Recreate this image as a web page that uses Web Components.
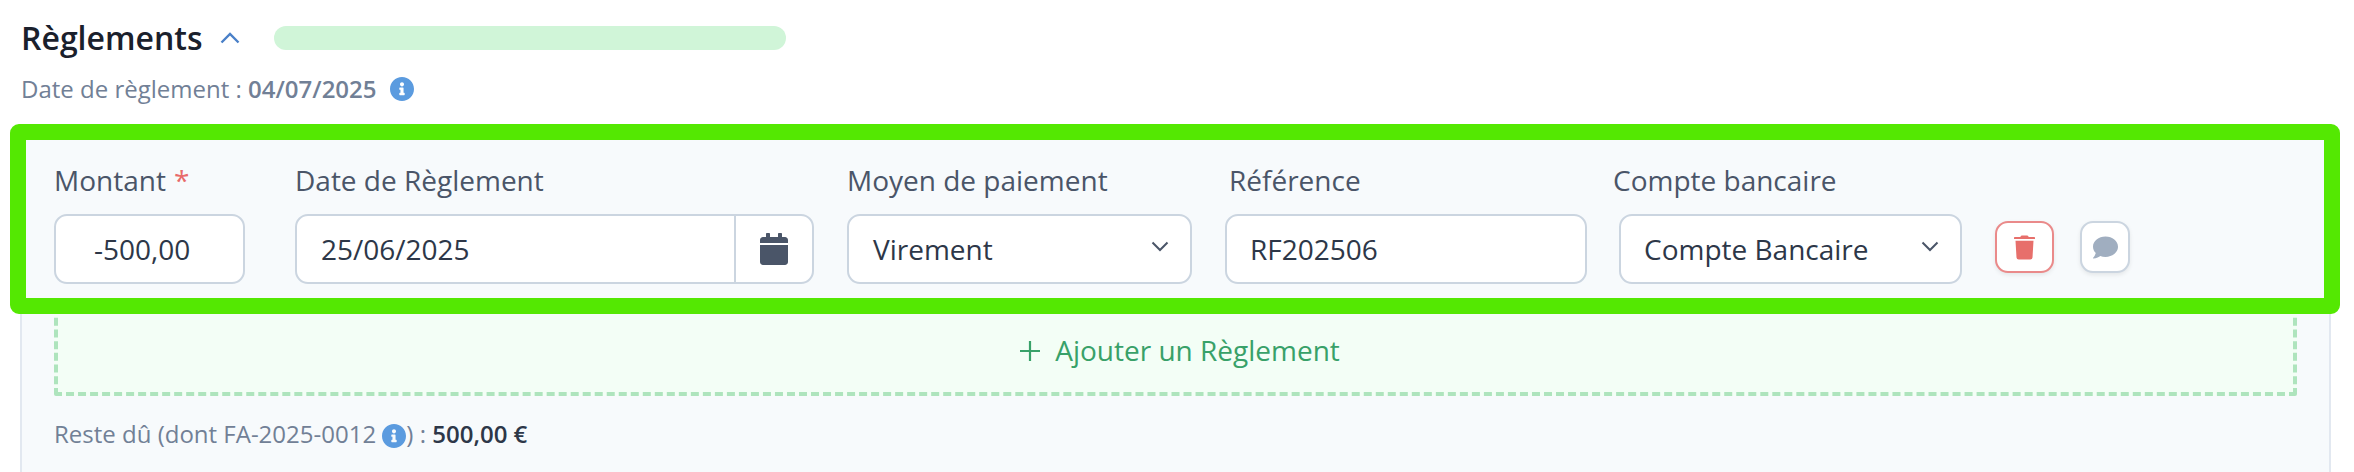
<!doctype html>
<html lang="fr"><head><meta charset="utf-8"><title>Règlements</title>
<style>
html,body{margin:0;background:#fff;height:472px;overflow:hidden}
body{font-family:"Open Sans",sans-serif;color:#4a5568}
b{font-weight:600}
</style></head><body>
<reglements-section>
  <span slot="date">Date de règlement : <b>04/07/2025</b></span>
  <payment-row>
    <form-field label="Montant" required style="width:191px"><text-box indent="38">-500,00</text-box></form-field>
    <form-field label="Date de Règlement" style="width:519px;margin-left:50px"><text-box indent="24" calendar>25/06/2025</text-box></form-field>
    <form-field label="Moyen de paiement" style="width:345px;margin-left:33px"><text-box chevron>Virement</text-box></form-field>
    <form-field label="Référence" shift="4" style="width:362px;margin-left:33px"><text-box>RF202506</text-box></form-field>
    <form-field label="Compte bancaire" shift="-6" style="width:343px;margin-left:32px"><text-box indent="23" chevron>Compte Bancaire</text-box></form-field>
    <icon-button kind="trash" style="margin-left:33px"></icon-button>
    <icon-button kind="comment" style="margin-left:26px"></icon-button>
  </payment-row>
  <add-button>Ajouter un Règlement</add-button>
  <balance-line>Reste dû (dont FA-2025-0012 <info-icon></info-icon>) : <strong>500,00 €</strong></balance-line>
</reglements-section>
<script>
const sh=(el,html)=>{el.attachShadow({mode:'open'}).innerHTML=html;};
class InfoIcon extends HTMLElement{connectedCallback(){sh(this,`<style>:host{display:inline-flex;vertical-align:-5px;width:24px;height:24px}svg{width:100%;height:100%;display:block}</style><svg viewBox="8 8 496 496"><path fill="#5b9bdf" d="M256 8C119 8 8 119.1 8 256c0 137 111 248 248 248s248-111 248-248C504 119.1 393 8 256 8zm0 110c23.2 0 42 18.8 42 42s-18.8 42-42 42-42-18.8-42-42 18.8-42 42-42zm56 254c0 6.6-5.4 12-12 12h-88c-6.6 0-12-5.4-12-12v-24c0-6.6 5.4-12 12-12h12v-64h-12c-6.6 0-12-5.4-12-12v-24c0-6.6 5.4-12 12-12h64c6.6 0 12 5.4 12 12v100h12c6.6 0 12 5.4 12 12v24z"/></svg>`);}}
customElements.define('info-icon',InfoIcon);
class ReglementsSection extends HTMLElement{connectedCallback(){sh(this,`<style>
:host{display:block;width:2354px;height:472px;overflow:hidden;font-family:"Open Sans",sans-serif;box-sizing:border-box;padding-top:18px}
.head{display:flex;align-items:center;height:40px;padding-left:21px}
h2{margin:0;font-size:32px;font-weight:600;color:#1a202c;line-height:40px}
.chev{margin-left:17px;width:20px;height:12px;display:block}
.bar{margin-left:34px;width:512px;height:24px;border-radius:12px;background:#d0f5d8}
.date{font-size:24px;line-height:28px;color:#718096;margin-top:17px;padding-left:21px;display:flex;align-items:center;gap:13px}
.panel{margin:21px 23px 0 20px;border-left:2px solid #e2e8f0;border-right:2px solid #e2e8f0;background:#f7fafc;padding:16px 32px 0 32px;height:400px;box-sizing:border-box}
</style>
<div class="head"><h2>Règlements</h2><svg class="chev" viewBox="0 0 20 12"><path d="M1.5 10.5 10 2l8.5 8.5" fill="none" stroke="#4a80c8" stroke-width="2.4"/></svg><div class="bar"></div></div>
<div class="date"><slot name="date"></slot><info-icon></info-icon></div>
<div class="panel"><slot></slot></div>`);}}
customElements.define('reglements-section',ReglementsSection);
class PaymentRow extends HTMLElement{connectedCallback(){sh(this,`<style>
:host{display:flex;align-items:flex-end;position:relative;height:158px;margin:0 -27px 0 -28px;padding:0 0 14px 28px;box-sizing:border-box;background:#f7fafc}
.hl{position:absolute;inset:-16px;border:16px solid #54e802;border-radius:9px;pointer-events:none;z-index:2}
</style><slot></slot><div class="hl"></div>`);}}
customElements.define('payment-row',PaymentRow);
class FormField extends HTMLElement{connectedCallback(){const r=this.hasAttribute('required'),s=this.getAttribute('shift')||0;sh(this,`<style>
:host{display:flex;flex-direction:column;flex:none}
label{font-size:28px;line-height:38px;color:#4a5568;margin:-1px 0 15px ${s}px;white-space:nowrap}
i{font-style:normal;color:#e86a6a;margin-left:8px}
</style><label>${this.getAttribute('label')}${r?'<i>*</i>':''}</label><slot></slot>`);}}
customElements.define('form-field',FormField);
class TextBox extends HTMLElement{connectedCallback(){const cal=this.hasAttribute('calendar'),ch=this.hasAttribute('chevron'),ind=this.getAttribute('indent')||(ch?24:23);sh(this,`<style>
:host{display:flex;height:70px;box-sizing:border-box;border:2px solid #cbd5e0;border-radius:13px;background:#fff;font-size:28px;color:#2d3748;align-items:center;overflow:hidden}
.t{flex:1;padding-left:${ind}px;white-space:nowrap;margin-top:-1px}
.cal{width:78px;height:100%;border-left:2px solid #cbd5e0;display:flex;align-items:center;justify-content:center;box-sizing:border-box}
.cal svg{width:28px;height:32px;display:block}
.ch{width:18px;height:11px;margin-right:21px;margin-top:-6px;display:block}
</style><span class="t"><slot></slot></span>${cal?`<span class="cal"><svg viewBox="0 0 448 512"><path fill="#4a5568" d="M0 464c0 26.5 21.5 48 48 48h352c26.5 0 48-21.5 48-48V192H0v272zM448 112c0-26.5-21.5-48-48-48h-48V16c0-8.8-7.2-16-16-16h-32c-8.8 0-16 7.2-16 16v48H160V16c0-8.8-7.2-16-16-16h-32c-8.8 0-16 7.2-16 16v48H48C21.5 64 0 85.5 0 112v48h448v-48z"/></svg></span>`:''}${ch?`<svg class="ch" viewBox="0 0 18 11"><path d="M1.5 1.5 9 9l7.5-7.5" fill="none" stroke="#4a5568" stroke-width="2"/></svg>`:''}`);}}
customElements.define('text-box',TextBox);
class IconButton extends HTMLElement{connectedCallback(){const t=this.getAttribute('kind')==='trash';sh(this,`<style>
:host{display:flex;flex:none;align-items:center;justify-content:center;box-sizing:border-box;height:52px;width:${t?59:50}px;margin-bottom:11px;background:#fff;border:2px solid ${t?'#ea8a8a':'#cbd5e0'};border-radius:13px;box-shadow:0 2px 4px rgba(0,0,0,.08)}
svg{display:block}
</style>${t?`<svg width="21" height="25" viewBox="0 0 448 512"><path fill="#e76f6b" d="M432 32H312l-9.4-18.7A24 24 0 0 0 281.1 0H166.8a23.72 23.72 0 0 0-21.4 13.3L136 32H16A16 16 0 0 0 0 48v20a8 8 0 0 0 8 8h432a8 8 0 0 0 8-8V48a16 16 0 0 0-16-16zM53.2 467a48 48 0 0 0 47.9 45h245.8a48 48 0 0 0 47.9-45L416 112H32z"/></svg>`:`<svg width="25" height="23" viewBox="0 32 512 448"><path fill="#a0aec0" d="M256 32C114.6 32 0 125.1 0 240c0 49.6 21.4 95 57 130.7C44.5 421.1 2.7 466 2.2 466.5c-2.2 2.3-2.8 5.7-1.5 8.7S4.8 480 8 480c66.3 0 116-31.8 140.6-51.4 32.7 12.3 69 19.4 107.4 19.4 141.4 0 256-93.1 256-208S397.4 32 256 32z"/></svg>`}`);}}
customElements.define('icon-button',IconButton);
class AddButton extends HTMLElement{connectedCallback(){sh(this,`<style>
:host{display:flex;align-items:center;justify-content:center;gap:14px;box-sizing:border-box;height:90px;margin-top:8px;padding:0 0 2px 8px;border-radius:2px;font-size:28px;color:#38a169;background:#f3fef6;border:4px dashed #aee4bd}
svg{width:22px;height:22px;display:block;margin-top:2px}
</style><svg viewBox="0 0 22 22"><path d="M11 1v20M1 11h20" stroke="#38a169" stroke-width="2.2" fill="none"/></svg><span><slot></slot></span>`);}}
customElements.define('add-button',AddButton);
class BalanceLine extends HTMLElement{connectedCallback(){sh(this,`<style>
:host{display:block;font-size:24px;line-height:28px;color:#718096;margin-top:24px;white-space:nowrap}
::slotted(strong){font-weight:600;color:#2d3748}
</style><slot></slot>`);}}
customElements.define('balance-line',BalanceLine);
</script>
</body></html>
